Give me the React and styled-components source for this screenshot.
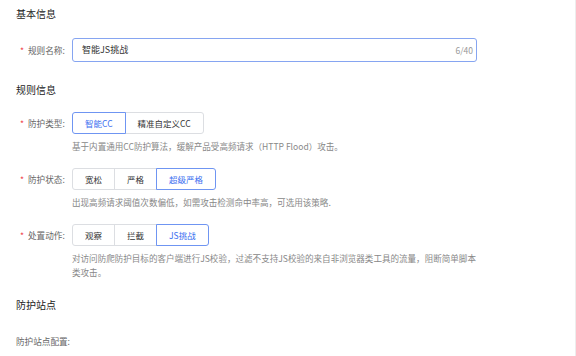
import styled, { createGlobalStyle } from "styled-components"

const GlobalStyle = createGlobalStyle`
    html, body {
        margin: 0;
        padding: 0;
        background: #FFFFFF;
    }
    body {
        font-family: "Noto Sans CJK SC", "Noto Sans", sans-serif;
        font-size: 9px;
        line-height: 14px;
    }
`

const Pagina = styled.div`
    width: 576px;
    height: 356px;
    box-sizing: border-box;
    padding: 7px 0 0 16px;
    border-right: 1px solid #EDEDED;
    overflow: hidden;
`

const TituloSecao = styled.div`
    font-size: 10px;
    line-height: 14px;
    font-weight: 400;
    color: #222222;
    margin-top: ${({ $top }) => $top || 0}px;
    margin-bottom: ${({ $bottom }) => $bottom || 0}px;
`

const ItemForm = styled.div`
    display: flex;
    align-items: flex-start;
    margin-bottom: ${({ $bottom }) => $bottom || 0}px;
`

const Rotulo = styled.div`
    width: 56px;
    flex-shrink: 0;
    font-size: 8.6px;
    line-height: ${({ $altura }) => $altura || 22}px;
    height: ${({ $altura }) => $altura || 22}px;
    color: #666666;
    white-space: nowrap;
    .asterisco{
        color: #F0434A;
        margin: 0 4px 0 4px;
    }
`

const Controle = styled.div`
    width: 405px;
`

const CampoTexto = styled.div`
    height: 24px;
    box-sizing: border-box;
    border: 1px solid #86A5F1;
    border-radius: 3px;
    display: flex;
    align-items: center;
    justify-content: space-between;
    padding: 0 3px 0 9px;
    font-size: 9px;
    .valor{
        color: #333333;
    }
    .contador{
        color: #999999;
        font-size: 8.5px;
    }
`

const Segmentos = styled.div`
    display: flex;
    width: fit-content;
`

const Segmento = styled.div`
    height: 22px;
    box-sizing: border-box;
    padding: 0 12px;
    display: flex;
    align-items: center;
    font-size: 8.5px;
    color: ${({ $ativo }) => $ativo ? '#3A6EF0' : '#333333'};
    border: 1px solid ${({ $ativo }) => $ativo ? '#6F95F2' : '#DCDEE2'};
    margin-left: -1px;
    position: relative;
    z-index: ${({ $ativo }) => $ativo ? 1 : 0};
    &:first-child{
        margin-left: 0;
        border-radius: 3px 0 0 3px;
    }
    &:last-child{
        border-radius: 0 3px 3px 0;
    }
`

const Descricao = styled.div`
    margin-top: 5px;
    font-size: 8.55px;
    line-height: 14px;
    color: #888888;
`

const GrupoSegmentos = ({ opcoes, ativo }) => (
    <Segmentos>
        {opcoes.map((opcao) => (
            <Segmento key={opcao} $ativo={opcao === ativo}>{opcao}</Segmento>
        ))}
    </Segmentos>
)

const App = () => {
    return(
        <>
            <GlobalStyle/>
            <Pagina>
                <TituloSecao $bottom={17}>基本信息</TituloSecao>
                <ItemForm>
                    <Rotulo $altura={24}><span className="asterisco">*</span>规则名称:</Rotulo>
                    <Controle>
                        <CampoTexto>
                            <span className="valor">智能JS挑战</span>
                            <span className="contador">6/40</span>
                        </CampoTexto>
                    </Controle>
                </ItemForm>

                <TituloSecao $top={21} $bottom={15}>规则信息</TituloSecao>
                <ItemForm $bottom={15}>
                    <Rotulo><span className="asterisco">*</span>防护类型:</Rotulo>
                    <Controle>
                        <GrupoSegmentos opcoes={['智能CC', '精准自定义CC']} ativo="智能CC"/>
                        <Descricao>基于内置通用CC防护算法，缓解产品受高频请求（HTTP Flood）攻击。</Descricao>
                    </Controle>
                </ItemForm>
                <ItemForm $bottom={15}>
                    <Rotulo><span className="asterisco">*</span>防护状态:</Rotulo>
                    <Controle>
                        <GrupoSegmentos opcoes={['宽松', '严格', '超级严格']} ativo="超级严格"/>
                        <Descricao>出现高频请求阈值次数偏低，如需攻击检测命中率高，可选用该策略.</Descricao>
                    </Controle>
                </ItemForm>
                <ItemForm>
                    <Rotulo><span className="asterisco">*</span>处置动作:</Rotulo>
                    <Controle>
                        <GrupoSegmentos opcoes={['观察', '拦截', 'JS挑战']} ativo="JS挑战"/>
                        <Descricao>对访问防爬防护目标的客户端进行JS校验，过滤不支持JS校验的来自非浏览器类工具的流量，阻断简单脚本类攻击。</Descricao>
                    </Controle>
                </ItemForm>

                <TituloSecao $top={19} $bottom={22}>防护站点</TituloSecao>
                <ItemForm>
                    <Rotulo $altura={14}>防护站点配置:</Rotulo>
                </ItemForm>
            </Pagina>
        </>
    )
}

export default App
